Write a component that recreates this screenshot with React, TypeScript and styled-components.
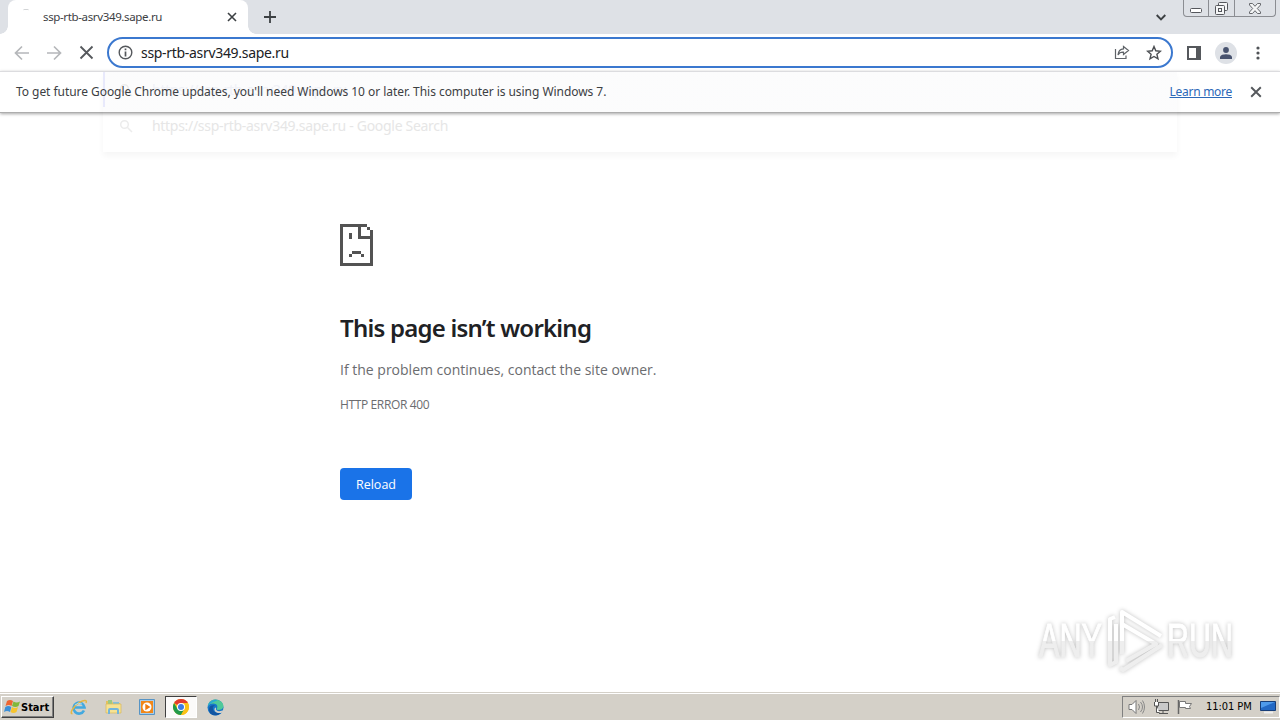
import React from "react";
import styled, { createGlobalStyle } from "styled-components";

const GlobalStyle = createGlobalStyle`
  * {
    box-sizing: border-box;
  }
  body {
    margin: 0;
    overflow: hidden;
    background-color: white;
  }
  svg {
    display: block;
    flex-shrink: 0;
  }
`;

const ui = `"DejaVu Sans Condensed", "DejaVu Sans", sans-serif`;
const web = `"Noto Sans", "Open Sans", sans-serif`;
const light = `"Open Sans", "Noto Sans", sans-serif`;

const Screen = styled.div`
  width: 1280px;
  height: 720px;
  display: flex;
  flex-direction: column;
  overflow: hidden;
  background-color: white;
  font-family: ${web};
`;

const Label = styled.span<{ $size: number; $spacing?: number; $color?: string }>`
  font-size: ${({ $size }) => $size}px;
  letter-spacing: ${({ $spacing }) => $spacing || 0}px;
  color: ${({ $color }) => $color || "#3c4043"};
  line-height: 18px;
  white-space: nowrap;
`;

/** tab strip */
const TabStrip = styled.header`
  display: flex;
  height: 34px;
  padding-left: 8px;
  background-color: #dee1e6;
`;

const Tab = styled.div`
  position: relative;
  display: flex;
  align-items: center;
  width: 240px;
  padding: 0 10px 0 15px;
  border-radius: 8px 8px 0 0;
  background-color: white;
  &::before,
  &::after {
    content: "";
    position: absolute;
    bottom: 0;
    width: 8px;
    height: 8px;
  }
  &::before {
    left: -8px;
    background: radial-gradient(circle at 0 0, transparent 7.5px, white 8px);
  }
  &::after {
    right: -8px;
    background: radial-gradient(circle at 100% 0, transparent 7.5px, white 8px);
  }
`;

const Spinner = styled.span`
  width: 6px;
  height: 3px;
  margin: -14px 14px 0 0;
  border-top: 1px solid #d2d4d6;
  border-radius: 3px;
`;

const IconButton = styled.button<{ $width?: number }>`
  display: flex;
  align-items: center;
  justify-content: center;
  width: ${({ $width }) => $width || 16}px;
  height: 100%;
  padding: 0;
  border: 0;
  background: none;
`;

const Spacer = styled.div`
  flex: 1;
`;

const WindowControls = styled.div`
  display: flex;
  height: 17px;
  margin: 0 4px 0 14px;
  border: 1px solid #8b8d92;
  border-top: 0;
  border-radius: 0 0 4px 4px;
  overflow: hidden;
`;

const WindowControl = styled.span<{ $width: number }>`
  display: flex;
  align-items: center;
  justify-content: center;
  width: ${({ $width }) => $width}px;
  & + & {
    border-left: 1px solid #8b8d92;
  }
`;

const MinimizeIcon = styled.svg`
  margin-top: 4px;
`;

/** toolbar */
const Toolbar = styled.div`
  display: flex;
  align-items: center;
  height: 37px;
  padding: 0 6px;
`;

const Omnibox = styled.div`
  display: flex;
  flex-shrink: 0;
  align-items: center;
  width: 1066px;
  height: 31px;
  margin-left: 5px;
  padding: 0 1px 0 9px;
  border: 2px solid #3b78cf;
  border-radius: 16px;
  background-color: white;
`;

const Url = styled(Label)`
  margin-left: 8px;
`;

const Avatar = styled.span`
  display: flex;
  align-items: center;
  justify-content: center;
  width: 22px;
  height: 22px;
  margin-right: 5px;
  border-radius: 50%;
  background-color: #dee1e6;
`;

/** update notice */
const InfoBar = styled.div`
  position: relative;
  display: flex;
  align-items: center;
  height: 42px;
  padding: 0 16px;
  border-top: 1px solid #dcdcdf;
  border-bottom: 1px solid #adadad;
  box-shadow: 0 1px 3px rgba(0, 0, 0, 0.35);
`;

const Notice = styled(Label)`
  z-index: 1;
`;

const LearnMore = styled(Label)`
  z-index: 1;
  margin-right: 16px;
  text-decoration: underline;
`;

/** suggestions list that is fading out behind the notice */
const Suggestions = styled.div`
  position: absolute;
  top: 0;
  left: 103px;
  width: 1074px;
  height: 80px;
  display: flex;
  flex-direction: column;
  border-left: 2px solid transparent;
  border-image: linear-gradient(rgba(70, 80, 240, 0.11) 44%, transparent 44%) 1;
  border-width: 0 0 0 2px;
  background: linear-gradient(rgba(50, 60, 100, 0.016) 50%, transparent 50%);
  box-shadow: 0 4px 6px rgba(0, 0, 0, 0.04);
  pointer-events: none;
`;

const Suggestion = styled.div`
  display: flex;
  align-items: center;
  gap: 19px;
  height: 36px;
  padding-left: 14px;
`;

/** error page */
const Page = styled.main`
  position: relative;
  flex: 1;
  padding: 111px 0 0 340px;
`;

const Title = styled.h1`
  margin: 46px 0 0;
  color: #202124;
  font-size: 24px;
  font-weight: 600;
  line-height: 32px;
  letter-spacing: -0.78px;
`;

const Message = styled.p<{ $size: number; $top: number; $spacing: number }>`
  margin: ${({ $top }) => $top}px 0 0;
  color: #6b6c6f;
  font-family: ${light};
  font-size: ${({ $size }) => $size}px;
  line-height: 20px;
  letter-spacing: ${({ $spacing }) => $spacing}px;
`;

const ReloadButton = styled.button`
  display: block;
  width: 72px;
  height: 32px;
  margin-top: 53px;
  padding: 0;
  border: 0;
  border-radius: 4px;
  background-color: #1a73e8;
  color: white;
  font: 12.5px ${light};
`;

const Watermark = styled.svg`
  position: absolute;
  right: 40px;
  bottom: 13px;
  overflow: visible;
  filter: drop-shadow(0 0 2px rgba(0, 0, 0, 0.25));
`;

/** taskbar */
const Taskbar = styled.footer`
  display: flex;
  align-items: center;
  height: 28px;
  padding: 1px 0 0 1px;
  border-top: 1px solid #d4d0c8;
  background-color: #d4d0c8;
  box-shadow: inset 0 1px white;
`;

const StartButton = styled.button`
  display: flex;
  align-items: center;
  gap: 0;
  width: 53px;
  height: 22px;
  padding: 0 0 0 2px;
  border: 1px solid;
  border-color: white #404040 #404040 white;
  box-shadow: inset -1px -1px #808080;
  background-color: #d4d0c8;
  color: black;
  font: bold 11px ${ui};
  letter-spacing: 0;
`;

const QuickLaunch = styled.div`
  display: flex;
  margin-left: 8px;
`;

const TaskButton = styled.span<{ $active?: boolean }>`
  display: flex;
  align-items: center;
  justify-content: center;
  width: 32px;
  height: 22px;
  margin: 0 1px;
  border: 1px solid transparent;
  ${({ $active }) =>
    $active &&
    `
    border-color: #404040 white white #404040;
    background-color: #fbfaf9;
  `}
`;

const Tray = styled.div`
  display: flex;
  align-items: center;
  gap: 8px;
  width: 158px;
  height: 22px;
  padding: 0 3px 0 5px;
  border: 1px solid;
  border-color: #808080 white white #808080;
`;

const TrayClock = styled(Label)`
  margin: 0 0 0 5px;
  font-family: ${ui};
`;

const CrossIcon: React.FC<{ size: number; color?: string; weight?: number }> = ({
  size,
  color = "#3c4043",
  weight = 1.6,
}) => (
  <svg width={size} height={size} viewBox="0 0 10 10">
    <path d="M1 1l8 8M9 1L1 9" stroke={color} strokeWidth={weight} />
  </svg>
);

const ArrowIcon: React.FC<{ forward?: boolean }> = ({ forward }) => (
  <svg
    width="16"
    height="16"
    viewBox="0 0 16 16"
    transform={forward ? "scale(-1 1)" : undefined}
  >
    <path
      d="M15 8H2M8 1.5L1.5 8 8 14.5"
      fill="none"
      stroke="#b5b7ba"
      strokeWidth="1.7"
    />
  </svg>
);

const SearchIcon = () => (
  <svg width="14" height="14" viewBox="0 0 14 14">
    <g fill="none" stroke="#ececec" strokeWidth="1.5">
      <circle cx="5.5" cy="5.5" r="3.8" />
      <path d="M8.5 8.5L13 13" />
    </g>
  </svg>
);

const SadPageIcon = () => (
  <svg width="33" height="42" viewBox="0 0 11 14" shapeRendering="crispEdges">
    <path
      fill="#535353"
      d="M0 0h9v1H7v3h3V2h1v12H0zM1 1v12h9V5H6V1zM9 1h1v1H9zM3 3h1v2H3zM4 9h3v1H4zM3 10h1v1H3zM7 10h1v1H7z"
      fillRule="evenodd"
    />
  </svg>
);

const ExplorerIcon = () => (
  <svg width="18" height="18" viewBox="0 0 18 18">
    <path
      d="M14 12.500A5.500 5.500 0 1 1 14.500 9.500H5"
      fill="none"
      stroke="#43a9df"
      strokeWidth="2.600"
    />
    <path
      d="M2.500 15.500C-.5 16.500 2 9 9 4.700C14 1.700 17.500 1.500 16 5"
      fill="none"
      stroke="#e5b643"
      strokeWidth="1.500"
    />
    <path d="M5 7q3-3 7-1" fill="none" stroke="#a3dcf8" />
  </svg>
);

const FolderIcon = () => (
  <svg width="17" height="16" viewBox="0 0 17 16">
    <path d="M1 2h6l1 2h7v10H1z" fill="#e4c25c" />
    <path d="M3 1h4v4H3z" fill="#9bc983" />
    <path d="M8 3h6v4H8z" fill="#83bfd9" />
    <path d="M1 5h15v9H1z" fill="#f6e292" stroke="#d7b75b" strokeWidth=".7" />
    <path d="M4 15v-4q0-1 1-1h7q1 0 1 1v4" fill="none" stroke="#72b5db" strokeWidth="2" />
  </svg>
);

const MediaIcon = () => (
  <svg width="16" height="16" viewBox="0 0 16 16">
    <path d="M.5.500h15v15H.5z" fill="#a9cde9" stroke="#5794c5" />
    <path d="M2 2h12v12H2z" fill="#f18719" />
    <circle cx="8" cy="8" r="4.500" fill="white" />
    <path d="M6.300 4.800L11.500 8l-5.200 3.200z" fill="#ee7b10" />
  </svg>
);

const ChromeIcon = () => (
  <svg width="16" height="16" viewBox="0 0 16 16">
    <circle cx="8" cy="8" r="8" fill="#fbc116" />
    <path d="M8 8L1.070 4a8 8 0 0 1 13.860 0z" fill="#e33b2e" />
    <path d="M1.070 4A8 8 0 0 0 8 16l3.500-6L8 8l-3.500 2z" fill="#229a4a" />
    <path d="M8 4h6.930A8 8 0 0 1 8 16l3.500-6z" fill="#fbc116" />
    <circle cx="8" cy="8" r="4" fill="white" />
    <circle cx="8" cy="8" r="3" fill="#3d7ce5" />
  </svg>
);

const EdgeIcon = () => (
  <svg width="17" height="17" viewBox="0 0 17 17">
    <circle cx="8.500" cy="8.500" r="8" fill="#1676c8" />
    <path d="M.8 7C2 .5 9-1.500 14 2.500c3.500 3 3 7 0 8-2 .8-5 .4-4-1.500C12 5 5 2.500.8 7z" fill="#4fc99a" />
    <path d="M.8 7C2.500 1.500 8 0 11 1.500 7 2 4 4 .8 7z" fill="#27a6d9" />
    <path d="M6 8c-1 4 3 7 8 5.500-4 5-12 3-12-3C2 7 5 5.500 8 6.500Q6.500 7 6 8z" fill="#1255a2" />
    <path d="M9 8.500c-1 4 3.500 4.500 8 2.500l-1.500 2.500c-5 1.500-8.500-.5-8-3.500q0-1.500 1.500-1.500z" fill="#d4d0c8" />
  </svg>
);

const StartFlag = () => (
  <svg width="17" height="16" viewBox="0 0 17 16">
    <path d="M3 2q3-2 6 0L7.500 7Q5 5 1.500 7z" fill="#ef6530" />
    <path d="M9.500 2.500q3 2 6.500 0L14.500 7q-3 2-6.500 0z" fill="#81b83a" />
    <path d="M1.300 8q3-2 6 0L6 13Q3 11 0 13z" fill="#3c8fd7" />
    <path d="M8 8q3 2 6 0l-1.500 5q-3 2-6 0z" fill="#f7c42d" />
  </svg>
);

const Browser: React.FC = () => (
  <>
    <TabStrip>
      <Tab>
        <Spinner />
        <Label $size={11.5} $spacing={-0.36}>
          ssp-rtb-asrv349.sape.ru
        </Label>
        <Spacer />
        <IconButton $width={12}>
          <CrossIcon size={10} />
        </IconButton>
      </Tab>
      <IconButton $width={44}>
        <svg width="12" height="12" viewBox="0 0 12 12">
          <path d="M6 0v12M0 6h12" stroke="#3c4043" strokeWidth="1.8" />
        </svg>
      </IconButton>
      <Spacer />
      <IconButton $width={16}>
        <svg width="10" height="7" viewBox="0 0 10 7">
          <path d="M.7 1L5 5.300 9.300 1" fill="none" stroke="#3c4043" strokeWidth="1.900" />
        </svg>
      </IconButton>
      <WindowControls>
        <WindowControl $width={24}>
          <MinimizeIcon width="12" height="5" viewBox="0 0 12 5">
            <rect x=".5" y=".5" width="11" height="4" rx="1" fill="white" stroke="#55575c" />
          </MinimizeIcon>
        </WindowControl>
        <WindowControl $width={26}>
          <svg width="13" height="13" viewBox="0 0 13 13">
            <g fill="#f5f6f7" stroke="#55575c">
              <rect x="3.500" y=".5" width="9" height="8" rx="1" />
              <rect x=".5" y="3.500" width="9" height="9" rx="1" />
              <rect x="3.500" y="6.500" width="3" height="3" />
            </g>
          </svg>
        </WindowControl>
        <WindowControl $width={41}>
          <svg width="12" height="11" viewBox="0 0 12 11">
            <path
              d="M.5.500h3L6 3.300 8.500.500h3v1.500L8.300 5.500l3.200 3.500v1.500h-3L6 7.700 3.500 10.500h-3V9l3.200-3.500L.5 2z"
              fill="#f5f6f7"
              stroke="#66686d"
            />
          </svg>
        </WindowControl>
      </WindowControls>
    </TabStrip>
    <Toolbar>
      <IconButton $width={32}>
        <ArrowIcon />
      </IconButton>
      <IconButton $width={32}>
        <ArrowIcon forward />
      </IconButton>
      <IconButton $width={32}>
        <CrossIcon size={15} color="#55585c" weight={1.2} />
      </IconButton>
      <Omnibox>
        <svg width="15" height="15" viewBox="0 0 15 15">
          <circle cx="7.500" cy="7.500" r="6.300" fill="none" stroke="#55585c" strokeWidth="1.400" />
          <path d="M7.500 3.500v1.800M7.500 6.500v5" stroke="#55585c" strokeWidth="1.700" />
        </svg>
        <Url $size={14} $spacing={-0.31} $color="#202124">
          ssp-rtb-asrv349.sape.ru
        </Url>
        <Spacer />
        <IconButton $width={32}>
          <svg width="16" height="15" viewBox="0 0 16 15">
            <path
              d="M1.500 4v9.500H12v-3M9.500 1.500l5 4-5 4V7.200Q5.500 7 4 10 4.500 4 9.500 3.800z"
              fill="none"
              stroke="#5f6368"
              strokeWidth="1.200"
            />
          </svg>
        </IconButton>
        <IconButton $width={32}>
          <svg width="16" height="16" viewBox="0 0 16 16">
            <path
              d="M8 1.500l1.800 4.300 4.700.4-3.600 3.100 1.100 4.600L8 11.500l-4 2.400 1.100-4.600L1.500 6.200l4.700-.4z"
              fill="none"
              stroke="#4b4e52"
              strokeWidth="1.400"
            />
          </svg>
        </IconButton>
      </Omnibox>
      <IconButton $width={42}>
        <svg width="14" height="14" viewBox="0 0 14 14">
          <path d="M0 0h14v14H0zM2 2v10h7V2z" fill="#55585c" fillRule="evenodd" />
        </svg>
      </IconButton>
      <Avatar>
        <svg width="12" height="12" viewBox="0 0 12 12">
          <circle cx="6" cy="3" r="2.900" fill="#48536f" />
          <path d="M0 12V9.800C1 6.500 11 6.500 12 9.800V12z" fill="#48536f" />
        </svg>
      </Avatar>
      <IconButton $width={32}>
        <svg width="4" height="14" viewBox="0 0 4 14">
          <g fill="#505357">
            <circle cx="2" cy="2" r="1.600" />
            <circle cx="2" cy="7" r="1.600" />
            <circle cx="2" cy="12" r="1.600" />
          </g>
        </svg>
      </IconButton>
    </Toolbar>
    <InfoBar>
      <Suggestions>
        <Suggestion>
          <SearchIcon />
          <Label $size={14} $spacing={-0.27} $color="#f0f1f7">
            https://ssp-rtb-asrv349.sape.ru
          </Label>
        </Suggestion>
        <Suggestion>
          <SearchIcon />
          <Label $size={14} $spacing={-0.3} $color="#e6e6e6">
            https://ssp-rtb-asrv349.sape.ru - Google Search
          </Label>
        </Suggestion>
      </Suggestions>
      <Notice $size={12} $spacing={-0.05}>
        To get future Google Chrome updates, you'll need Windows 10 or later.
        This computer is using Windows 7.
      </Notice>
      <Spacer />
      <LearnMore $size={12} $spacing={-0.28} $color="#2c68b8">
        Learn more
      </LearnMore>
      <IconButton>
        <CrossIcon size={12} color="#55585c" />
      </IconButton>
    </InfoBar>
  </>
);

const ErrorPage: React.FC = () => (
  <Page>
    <SadPageIcon />
    <Title>This page isn’t working</Title>
    <Message $size={14} $top={16} $spacing={0}>
      If the problem continues, contact the site owner.
    </Message>
    <Message $size={12} $top={15} $spacing={-0.37}>
      HTTP ERROR 400
    </Message>
    <ReloadButton type="button">Reload</ReloadButton>
    <Watermark width="210" height="74" viewBox="0 0 210 74">
      <defs>
        <linearGradient id="mark" gradientUnits="userSpaceOnUse" x1="0" y1="0" x2="0" y2="74">
          <stop offset="49%" stopColor="#ffffff" />
          <stop offset="49%" stopColor="#eeeeee" />
        </linearGradient>
      </defs>
      <g
        fill="url(#mark)"
        stroke="url(#mark)"
        strokeWidth="1"
        fontFamily="Liberation Sans"
        fontSize="48"
      >
        <text x="9" y="52" textLength="63" lengthAdjust="spacingAndGlyphs">
          ANY
        </text>
        <text x="137" y="52" textLength="66" lengthAdjust="spacingAndGlyphs">
          RUN
        </text>
      </g>
      <g fill="none" stroke="url(#mark)" strokeWidth="4" strokeLinejoin="round">
        <path d="M92 49V7l39 24M92 19l34 20-30 17M85 12l-5 2v46l6-3V19M90 63l3 2 39-25" />
      </g>
    </Watermark>
  </Page>
);

const App: React.FC = () => (
  <Screen>
    <GlobalStyle />
    <Browser />
    <ErrorPage />
    <Taskbar>
      <StartButton type="button">
        <StartFlag />
        Start
      </StartButton>
      <QuickLaunch>
        <TaskButton>
          <ExplorerIcon />
        </TaskButton>
        <TaskButton>
          <FolderIcon />
        </TaskButton>
        <TaskButton>
          <MediaIcon />
        </TaskButton>
        <TaskButton $active>
          <ChromeIcon />
        </TaskButton>
        <TaskButton>
          <EdgeIcon />
        </TaskButton>
      </QuickLaunch>
      <Spacer />
      <Tray>
        <svg width="17" height="16" viewBox="0 0 17 16">
          <path d="M1 5.500h3l4-4v13l-4-4H1z" fill="white" stroke="#777" />
          <path d="M10.500 5q2 3 0 6M12.500 3q4 5 0 10M14.500 1.500q4 6.500 0 13" fill="none" stroke="#888" />
        </svg>
        <svg width="16" height="16" viewBox="0 0 16 16">
          <path d="M4.500 3.500h11v8h-11z" fill="#c9c9c9" stroke="#555" />
          <path d="M6 14.500h9M10 12v2" stroke="#555" />
          <path d="M1.500 3v4h4V3M2.500 3V0M4.500 3V0M3.500 7v6.500h3" fill="white" stroke="#555" />
        </svg>
        <svg width="16" height="16" viewBox="0 0 16 16">
          <path d="M1.500 1v14" stroke="#666" strokeWidth="1.500" />
          <path d="M2.500 2.500h6v2h6l-2 3 1 2h-5v-1h-6z" fill="white" stroke="#777" />
        </svg>
        <TrayClock $size={11} $spacing={-0.05} $color="#000">
          11:01 PM
        </TrayClock>
        <svg width="16" height="14" viewBox="0 0 16 14">
          <path d="M.5 1.500h15v9H.5z" fill="#2369c5" stroke="#173e79" />
          <path d="M1 2h14L1 8z" fill="#4e9aeb" />
          <path d="M4 12.500h9" stroke="#eee" strokeWidth="2" />
        </svg>
      </Tray>
    </Taskbar>
  </Screen>
);

export default App;
